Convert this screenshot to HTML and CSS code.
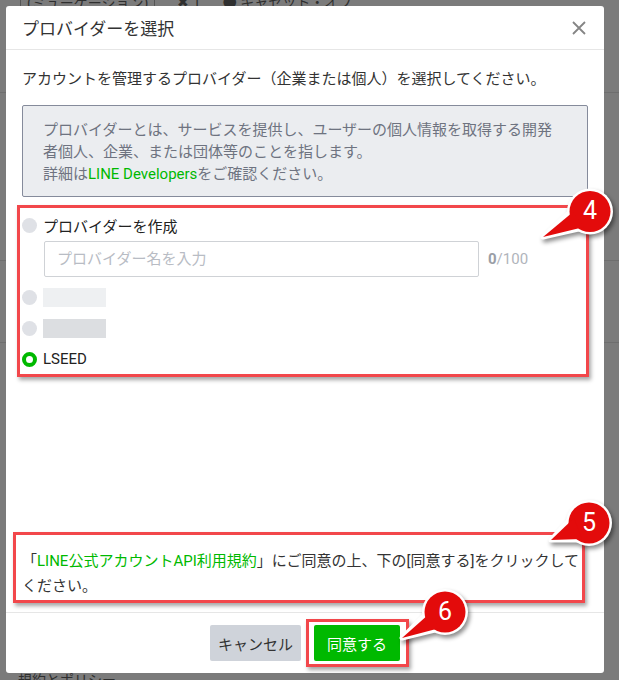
FILE: index.html
```html
<!DOCTYPE html>
<html lang="ja">
<head>
    <meta charset="UTF-8">
    <meta name="viewport" content="width=device-width, initial-scale=1.0">
    <title>プロバイダーを選択</title>
    <link rel="stylesheet" href="styles.css">
</head>
<body>
    <!-- ページ本体（オーバーレイの下） -->
    <div class="page">
        <div class="page-nav">
            <span class="nav-tag">(ミューゲーション)</span>
            <span>✖ 1</span>
            <span>● キャセット・オフ</span>
        </div>
        <div class="page-row"></div>
        <div class="page-row tall"></div>
        <div class="page-row"></div>
        <div class="page-foot">規約とポリシー</div>
    </div>

    <!-- モーダル -->
    <div class="modal">
        <div class="modal-header">
            <h2>プロバイダーを選択</h2>
            <button class="close" aria-label="閉じる">
                <svg width="14" height="14" viewBox="0 0 14 14"><path d="M1 1L13 13M13 1L1 13" stroke="#858585" stroke-width="1.8" fill="none"/></svg>
            </button>
        </div>

        <div class="modal-body">
            <p class="lead">アカウントを管理するプロバイダー（企業または個人）を選択してください。</p>

            <div class="info">
                プロバイダーとは、サービスを提供し、ユーザーの個人情報を取得する開発者個人、企業、または団体等のことを指します。<br>
                詳細は<a href="#">LINE Developers</a>をご確認ください。
            </div>

            <div class="providers">
                <label class="option"><span class="radio"></span>プロバイダーを作成</label>
                <div class="name-row">
                    <input type="text" placeholder="プロバイダー名を入力">
                    <span class="count"><b>0</b>/100</span>
                </div>
                <label class="option"><span class="radio"></span><span class="masked light"></span></label>
                <label class="option"><span class="radio"></span><span class="masked"></span></label>
                <label class="option"><span class="radio checked"></span>LSEED</label>
            </div>

            <p class="terms">「<a href="#">LINE公式アカウントAPI利用規約</a>」にご同意の上、下の[同意する]をクリックしてください。</p>
        </div>

        <div class="modal-footer">
            <button class="btn btn-cancel">キャンセル</button>
            <button class="btn btn-agree">同意する</button>
        </div>

        <!-- 注釈の枠 -->
        <div class="mark mark-4"></div>
        <div class="mark mark-5"></div>
        <div class="mark mark-6"></div>
    </div>

    <!-- 番号の吹き出し -->
    <div class="callout callout-4">
        <svg width="80" height="62" viewBox="0 0 80 62">
            <circle cx="55" cy="28.5" r="23" fill="#fff"/>
            <polygon points="37,27 48,45 8,54" fill="#fff" stroke="#fff" stroke-width="5" stroke-linejoin="round"/>
            <circle cx="55" cy="28.5" r="20.5" fill="#e30b0b"/>
            <polygon points="38,29 49,44 8,54" fill="#e30b0b"/>
        </svg>
        <span>4</span>
    </div>
    <div class="callout callout-5">
        <svg width="80" height="62" viewBox="0 0 80 62">
            <circle cx="54" cy="29" r="23" fill="#fff"/>
            <polygon points="38,22 46,46 16,46" fill="#fff" stroke="#fff" stroke-width="5" stroke-linejoin="round"/>
            <circle cx="54" cy="29" r="20.5" fill="#e30b0b"/>
            <polygon points="39,24 47,45 16,46" fill="#e30b0b"/>
        </svg>
        <span>5</span>
    </div>
    <div class="callout callout-6">
        <svg width="80" height="62" viewBox="0 0 80 62">
            <circle cx="53" cy="29" r="23" fill="#fff"/>
            <polygon points="36,29 47,46 10,55" fill="#fff" stroke="#fff" stroke-width="5" stroke-linejoin="round"/>
            <circle cx="53" cy="29" r="20.5" fill="#e30b0b"/>
            <polygon points="37,31 48,45 10,55" fill="#e30b0b"/>
        </svg>
        <span>6</span>
    </div>
</body>
</html>
```

FILE: styles.css
```css
* {
    margin: 0;
    padding: 0;
    box-sizing: border-box;
    font-family: Roboto, 'Noto Sans CJK JP', sans-serif;
}

body {
    width: 619px;
    height: 680px;
    overflow: hidden;
    background-color: #7b7b7b;
    position: relative;
}

/* 背景のページ */
.page {
    height: 680px;
    display: flex;
    flex-direction: column;
    color: #2f2f2f;
}

.page-nav {
    display: flex;
    gap: 22px;
    padding-left: 20px;
    margin-top: -7px;
    height: 18px;
    font-size: 14px;
    line-height: 18px;
}

.nav-tag {
    border: 1px solid #555;
    border-radius: 4px;
    padding: 0 6px;
}

.page-row {
    height: 82px;
    border-bottom: 1px solid #6e6e6e;
}

.page-row.tall {
    height: 168px;
}

.page-foot {
    margin-top: auto;
    padding-left: 18px;
    font-size: 14px;
    line-height: 16px;
    height: 8px;
    overflow: visible;
}

/* モーダル */
.modal {
    position: absolute;
    top: 6px;
    left: 6px;
    width: 598px;
    height: 667px;
    background-color: #fff;
    border-radius: 3px;
    display: flex;
    flex-direction: column;
}

.modal-header {
    height: 44px;
    padding: 0 18px 0 16px;
    display: flex;
    align-items: center;
    justify-content: space-between;
    border-bottom: 1px solid #e6e6e6;
}

.modal-header h2 {
    font-size: 17px;
    font-weight: normal;
    color: #333;
}

.close {
    background: none;
    border: none;
    display: flex;
    cursor: pointer;
}

.modal-body {
    flex: 1;
    display: flex;
    flex-direction: column;
    padding: 18px 16px 13px;
}

.lead {
    font-size: 15px;
    line-height: 22px;
    color: #333;
}

.info {
    margin-top: 15px;
    background-color: #ebedf0;
    border: 1px solid #858b9b;
    border-radius: 2px;
    padding: 13px 20px 11px;
    font-size: 15px;
    line-height: 22px;
    color: #6e7380;
}

.info a {
    color: #00b900;
    text-decoration: none;
}

.providers {
    margin-top: 17px;
}

.option {
    display: flex;
    align-items: center;
    height: 22px;
    gap: 5px;
    font-size: 15px;
    color: #222;
    margin-top: 9px;
}

.option:first-child {
    margin-top: 0;
}

.radio {
    width: 15px;
    height: 15px;
    border-radius: 50%;
    background-color: #dfe1e6;
    margin-right: 1px;
}

.radio.checked {
    background-color: #fff;
    border: 4px solid #00b900;
}

.masked {
    width: 63px;
    height: 19px;
    background-color: #dcdee1;
}

.masked.light {
    background-color: #eef0f2;
}

.name-row {
    display: flex;
    align-items: center;
    gap: 9px;
    margin: 5px 0 0 22px;
}

.name-row input {
    width: 435px;
    height: 36px;
    border: 1px solid #cfd2d6;
    border-radius: 2px;
    padding: 0 12px;
    font-size: 15px;
    outline: none;
}

.name-row input::placeholder {
    color: #b8bcc4;
}

.count {
    font-size: 15px;
    color: #b0b4bb;
}

.count b {
    color: #9a9ea6;
}

.terms {
    margin-top: auto;
    font-size: 15px;
    line-height: 25px;
    color: #333;
}

.terms a {
    color: #00b900;
    text-decoration: none;
}

.modal-footer {
    border-top: 1px solid #e6e6e6;
    padding: 12px 0;
    display: flex;
    justify-content: center;
    gap: 13px;
}

.btn {
    height: 36px;
    border: none;
    border-radius: 2px;
    font-size: 15px;
    cursor: pointer;
}

.btn-cancel {
    width: 91px;
    background-color: #cfd3da;
    color: #333;
}

.btn-agree {
    width: 86px;
    background-color: #00b900;
    color: #fff;
}

/* 注釈 */
.mark {
    position: absolute;
    border: 3px solid #f2474b;
    box-shadow: 2px 3px 4px rgba(0, 0, 0, 0.35);
}

.mark-4 {
    left: 11px;
    top: 199px;
    width: 572px;
    height: 172px;
}

.mark-5 {
    left: 7px;
    top: 526px;
    width: 572px;
    height: 71px;
}

.mark-6 {
    left: 300px;
    top: 613px;
    width: 103px;
    height: 48px;
}

.callout {
    position: absolute;
    width: 80px;
    height: 62px;
}

.callout svg {
    display: block;
    filter: drop-shadow(2px 3px 2px rgba(0, 0, 0, 0.45));
}

.callout span {
    position: absolute;
    top: 0;
    color: #fff;
    font-size: 25px;
    line-height: 26px;
    width: 40px;
    text-align: center;
}

.callout-4 {
    left: 535px;
    top: 183px;
}

.callout-4 span {
    left: 35px;
    top: 15px;
}

.callout-5 {
    left: 535px;
    top: 494px;
}

.callout-5 span {
    left: 34px;
    top: 16px;
}

.callout-6 {
    left: 392px;
    top: 583px;
}

.callout-6 span {
    left: 33px;
    top: 16px;
}
```
